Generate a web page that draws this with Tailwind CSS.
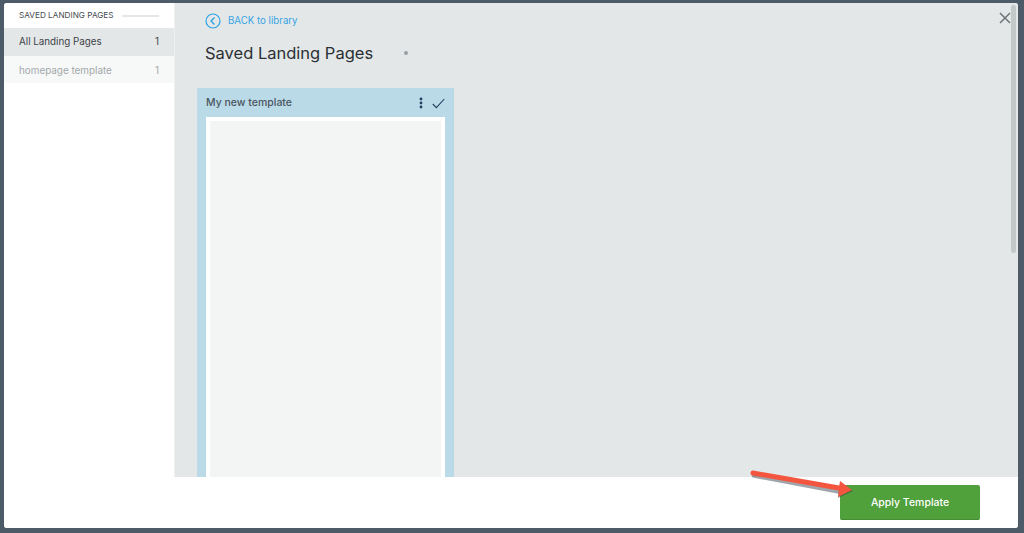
<!DOCTYPE html>
<html lang="en">
<head>
    <meta charset="UTF-8">
    <title>Saved Landing Pages</title>
    <script src="https://cdn.jsdelivr.net/npm/@tailwindcss/browser@4"></script>
</head>
<body class="bg-[#4d5a67] h-[533px] overflow-hidden font-['Inter',sans-serif]">
    <!-- Modal -->
    <div class="relative ml-1 mt-[3px] w-[1014px] h-[525px] bg-white rounded-[3px] flex flex-col overflow-hidden">
        <div class="flex h-[474px]">
            <!-- Sidebar -->
            <aside class="w-[171px] shrink-0 bg-white border-r border-[#eef0f0]">
                <div class="h-[25px] pl-[15px] pr-[15px] flex items-center gap-2">
                    <span class="text-[8.2px] text-[#444b50] whitespace-nowrap">SAVED LANDING PAGES</span>
                    <span class="flex-1 h-[2px] bg-[#e4e7e8]"></span>
                </div>
                <div class="h-[28px] pl-[15px] pr-[15px] pt-px flex items-center justify-between bg-[#e4e7e8] text-[9.8px] text-[#3c4347]">
                    <span>All Landing Pages</span><span>1</span>
                </div>
                <div class="h-[27px] pl-[15px] pr-[15px] pt-px flex items-center justify-between bg-[#f7f8f8] text-[9.9px] text-[#a3a8aa]">
                    <span>homepage template</span><span>1</span>
                </div>
            </aside>
            <!-- Content -->
            <main class="relative flex-1 bg-[#e3e7e8] overflow-hidden">
                <div class="pl-[30px] pt-[10px] flex items-center gap-[7px]">
                    <svg width="16" height="16" viewBox="0 0 16 16" fill="none" stroke="#2ea3e3" stroke-width="1.2">
                        <circle cx="8" cy="8" r="7"></circle>
                        <path d="M9.5 4.5 6 8l3.5 3.5" stroke-width="1.4"></path>
                    </svg>
                    <span class="pt-px text-[9.7px] text-[#38a5e4]">BACK to library</span>
                </div>
                <div class="pl-[30px] mt-[12px] flex items-center">
                    <h1 class="text-[16.5px] leading-[24px] text-[#2b3034]">Saved Landing Pages</h1>
                    <span class="ml-[31px] w-1 h-1 rounded-full bg-[#9aa0a3]"></span>
                </div>
                <!-- Template card -->
                <div class="ml-[22px] mt-[23px] w-[257px] h-[400px] bg-[#bbdae8] px-[9px]">
                    <div class="h-[29px] pt-px flex items-center justify-between">
                        <span class="text-[10.5px] font-medium text-[#4a5660]">My new template</span>
                        <div class="flex items-center gap-[9px]">
                            <svg width="4" height="12" viewBox="0 0 4 12" fill="#22405e">
                                <circle cx="2" cy="2" r="1.4"></circle>
                                <circle cx="2" cy="6" r="1.4"></circle>
                                <circle cx="2" cy="10" r="1.4"></circle>
                            </svg>
                            <svg width="13" height="11" viewBox="0 0 13 11" fill="none" stroke="#22405e" stroke-width="1.1">
                                <path d="M.8 6 4.3 9.6 12.3 1"></path>
                            </svg>
                        </div>
                    </div>
                    <div class="bg-[#f3f5f4] border-4 border-white border-b-0 h-[371px]"></div>
                </div>
                <!-- Scrollbar -->
                <div class="absolute right-[2px] top-[2px] w-[5px] h-[248px] bg-[#c3c8c9] rounded-[3px]"></div>
                <!-- Close -->
                <svg class="absolute right-[7px] top-[9px]" width="12" height="12" viewBox="0 0 12 12" stroke="#6d7478" stroke-width="1.5">
                    <path d="M1 1l10 10M11 1 1 11"></path>
                </svg>
            </main>
        </div>
        <!-- Footer -->
        <footer class="flex-1 bg-white flex justify-end items-start pt-[8px] pr-[38px]">
            <button class="w-[140px] h-[35px] pt-px rounded-[2px] bg-[#50a03c] border-b border-[#458c34] text-[10.5px] font-medium text-white">Apply Template</button>
        </footer>
        <!-- Red annotation arrow -->
        <svg class="absolute left-[743px] top-[465px]" width="112" height="36" viewBox="0 0 112 36">
            <path d="M7 6 92 22" stroke="#2d3a44" stroke-width="4.5" stroke-linecap="round" opacity=".45" transform="translate(0 1.5)"></path>
            <path d="M93 14 106 23 91 30Z" fill="#2d3a44" opacity=".45"></path>
            <path d="M6 5 92 20" stroke="#f4553f" stroke-width="5" stroke-linecap="round"></path>
            <path d="M93 13 105 22 91 29Z" fill="#f4553f"></path>
        </svg>
    </div>
</body>
</html>
